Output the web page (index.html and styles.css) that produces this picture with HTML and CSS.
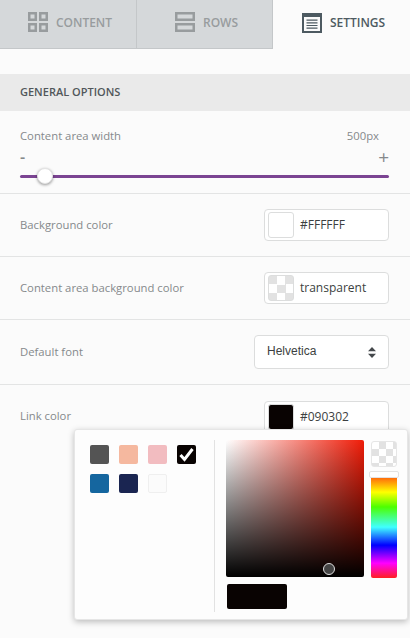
FILE: index.html
```html
<!DOCTYPE html>
<html lang="en">
<head>
    <meta charset="UTF-8">
    <meta name="viewport" content="width=device-width, initial-scale=1.0">
    <title>Settings</title>
    <link rel="stylesheet" href="styles.css">
</head>
<body>
    <div class="tabs">
        <div class="tab">
            <svg class="tab-icon" viewBox="0 0 20 20">
                <path fill-rule="evenodd" d="M0 0h9v9H0zM2.500 2.500v4h4v-4zM11 0h9v9h-9zM13.500 2.500v4h4v-4zM0 11h9v9H0zM2.500 13.500v4h4v-4zM11 11h9v9h-9zM13.500 13.500v4h4v-4z"/>
            </svg>
            <span>CONTENT</span>
        </div>
        <div class="tab">
            <svg class="tab-icon" viewBox="0 0 20 20">
                <path fill-rule="evenodd" d="M0 0h20v9H0zM2.500 2.500v4h15v-4zM0 11h20v9H0zM2.500 13.500v4h15v-4z"/>
            </svg>
            <span>ROWS</span>
        </div>
        <div class="tab active">
            <svg class="tab-icon" viewBox="0 0 20 20">
                <path fill-rule="evenodd" d="M0 0h20v20H0zM2 4v14h16V4z"/>
                <path d="M4.500 6.500h11v1.200h-11zM4.500 9.200h11v1.200h-11zM4.500 11.900h11v1.200h-11zM4.500 14.600h11v1.200h-11z"/>
            </svg>
            <span>SETTINGS</span>
        </div>
    </div>

    <div class="section-title">GENERAL OPTIONS</div>

    <div class="row slider-row">
        <div class="slider-head">
            <span>Content area width</span>
            <span class="slider-value">500px</span>
        </div>
        <div class="slider-signs">
            <span class="minus">-</span>
            <span class="plus">+</span>
        </div>
        <div class="slider-track">
            <div class="slider-knob"></div>
        </div>
    </div>

    <div class="row">
        <span class="row-label">Background color</span>
        <div class="color-input">
            <div class="swatch"></div>
            <span>#FFFFFF</span>
        </div>
    </div>

    <div class="row">
        <span class="row-label">Content area background color</span>
        <div class="color-input">
            <div class="swatch swatch-clear"></div>
            <span>transparent</span>
        </div>
    </div>

    <div class="row font-row">
        <span class="row-label">Default font</span>
        <div class="select">
            <span>Helvetica</span>
            <svg class="select-arrows" viewBox="0 0 8 11">
                <path d="M4 0l4 4.300H0zM4 11L0 6.700h8z"/>
            </svg>
        </div>
    </div>

    <div class="row link-row">
        <span class="row-label">Link color</span>
        <div class="color-input">
            <div class="swatch black"></div>
            <span>#090302</span>
        </div>
    </div>

    <div class="picker">
        <div class="presets">
            <div class="preset gray"></div>
            <div class="preset peach"></div>
            <div class="preset pink"></div>
            <div class="preset black">
                <svg viewBox="0 0 19 19">
                    <path d="M3.500 10l4 4.500 8-10.500" fill="none" stroke="#fff" stroke-width="3"/>
                </svg>
            </div>
            <div class="preset blue"></div>
            <div class="preset navy"></div>
            <div class="preset white"></div>
        </div>
        <div class="picker-main">
            <div class="picker-top">
                <div class="saturation">
                    <div class="saturation-dot"></div>
                </div>
                <div class="picker-side">
                    <div class="alpha"></div>
                    <div class="hue">
                        <div class="hue-handle"></div>
                    </div>
                </div>
            </div>
            <div class="result"></div>
        </div>
    </div>
</body>
</html>
```

FILE: styles.css
```css
body {
    margin: 0;
    height: 638px;
    overflow: hidden;
    position: relative;
    background: #fbfbfb;
    font-family: "Open Sans", "Noto Sans", sans-serif;
    font-size: 11.3px;
    color: #85898b;
}

.tabs {
    display: flex;
    height: 49px;
    margin-bottom: 25px;
}

.tab {
    flex: 1;
    display: flex;
    align-items: center;
    justify-content: center;
    gap: 8px;
    padding: 0 0 4px 4px;
    box-sizing: border-box;
    background: #d5d8da;
    border-right: 1px solid #c4c7c9;
    border-bottom: 1px solid #c4c7c9;
    color: #989c9e;
    font-size: 12px;
    font-weight: 600;
}

.tab:first-child {
    flex: 0 0 137px;
}

.tab:nth-child(2) {
    flex: 0 0 136px;
}

.tab.active {
    background: #fbfbfb;
    border: none;
    color: #4d5a61;
}

.tab-icon {
    width: 20px;
    height: 20px;
    fill: #989c9e;
}

.active .tab-icon {
    fill: #4d5a61;
}

.section-title {
    height: 37px;
    line-height: 36px;
    padding-left: 20px;
    background: #eaeaea;
    color: #51575a;
    font-size: 11px;
    font-weight: 600;
}

.row {
    display: flex;
    align-items: center;
    justify-content: space-between;
    height: 63px;
    box-sizing: border-box;
    padding: 0 21px 0 20px;
    border-bottom: 1px solid #e3e4e4;
}

.row-label {
    margin-bottom: 2px;
}

.slider-row {
    display: block;
    height: 83px;
    padding-top: 17px;
}

.slider-head {
    display: flex;
    justify-content: space-between;
    line-height: 16px;
    padding-right: 10px;
}

.slider-signs {
    display: flex;
    justify-content: space-between;
    height: 16px;
    line-height: 16px;
    margin-top: 5px;
}

.minus {
    font-size: 16px;
    font-weight: 600;
}

.plus {
    font-size: 19px;
}

.slider-track {
    position: relative;
    height: 3px;
    margin-top: 10px;
    background: #7b4492;
    border-radius: 2px;
}

.slider-knob {
    position: absolute;
    left: 17px;
    top: -7px;
    width: 16px;
    height: 16px;
    box-sizing: border-box;
    background: #fff;
    border: 1px solid #e4e4e4;
    border-radius: 50%;
    box-shadow: 0 1px 3px rgba(0, 0, 0, 0.4);
}

.color-input {
    display: flex;
    align-items: center;
    gap: 6px;
    width: 125px;
    height: 32px;
    box-sizing: border-box;
    padding-left: 3px;
    background: #fff;
    border: 1px solid #dcdddd;
    border-radius: 4px;
    color: #3c3f41;
    font-size: 12px;
}

.color-input span {
    margin-bottom: 1px;
}

.swatch {
    width: 26px;
    height: 26px;
    box-sizing: border-box;
    background: #fff;
    border: 1px solid #dcdddd;
    border-radius: 3px;
}

.swatch.black {
    background: #090302;
}

.swatch-clear {
    background-image: conic-gradient(#e2e2e2 25%, #fff 0 50%, #e2e2e2 0 75%, #fff 0);
    background-size: 17px 17px;
    background-position: 8px 0;
}

.font-row {
    height: 65px;
}

.select {
    display: flex;
    align-items: center;
    justify-content: space-between;
    width: 135px;
    height: 34px;
    box-sizing: border-box;
    padding: 0 12px 2px 12px;
    background: #fff;
    border: 1px solid #dcdddd;
    border-radius: 4px;
    color: #3c3f41;
    font-family: "Liberation Sans", Arial, sans-serif;
    font-size: 12px;
}

.select-arrows {
    width: 8px;
    height: 11px;
    margin-top: 3px;
    fill: #44484b;
}

.link-row {
    border-bottom: none;
}

.picker {
    position: absolute;
    left: 74px;
    top: 429px;
    width: 334px;
    height: 191px;
    display: flex;
    box-sizing: border-box;
    padding: 10px 11px 0 0;
    background: #fdfdfd;
    border: 1px solid #e6e6e6;
    border-radius: 3px;
    box-shadow: 0 2px 6px rgba(0, 0, 0, 0.25);
}

.presets {
    flex: 0 0 140px;
    height: 172px;
    box-sizing: border-box;
    display: grid;
    grid-template-columns: repeat(4, 19px);
    grid-auto-rows: 19px;
    gap: 10px;
    align-content: start;
    padding: 5px 0 0 15px;
    border-right: 1px solid #e2e2e2;
}

.preset {
    border-radius: 2px;
}

.preset svg {
    display: block;
}

.gray { background: #545454; }
.peach { background: #f5b89f; }
.pink { background: #f2bcc0; }
.black { background: #090302; }
.blue { background: #15669f; }
.navy { background: #1a2551; }
.white { background: #fbfbfb; border: 1px solid #efefef; }

.picker-main {
    padding-left: 11px;
}

.picker-top {
    display: flex;
    gap: 7px;
}

.saturation {
    position: relative;
    width: 138px;
    height: 137px;
    background: linear-gradient(to top, #000, transparent), linear-gradient(to right, #fff, #f01c08);
    border-radius: 2px;
}

.saturation-dot {
    position: absolute;
    left: 97px;
    top: 123px;
    width: 12px;
    height: 12px;
    box-sizing: border-box;
    background: #444;
    border: 1px solid #ddd;
    border-radius: 50%;
}

.picker-side {
    width: 26px;
    margin-top: 1px;
}

.alpha {
    height: 26px;
    margin-bottom: 5px;
    box-sizing: border-box;
    background-color: #fff;
    background-image: conic-gradient(#e2e2e2 25%, #fff 0 50%, #e2e2e2 0 75%, #fff 0);
    background-size: 14px 14px;
    border: 1px solid #e6e6e6;
    border-radius: 3px;
}

.hue {
    position: relative;
    height: 106px;
    background: linear-gradient(to bottom, #ff3010 0%, #ffff00 19%, #4cff00 33%, #40ffff 52%, #0000ff 69%, #ff00ff 86%, #ff2020 100%);
    border-radius: 2px;
}

.hue-handle {
    position: absolute;
    left: -2px;
    top: -1px;
    width: 30px;
    height: 7px;
    box-sizing: border-box;
    background: #fff;
    border: 1px solid #e2e2e2;
    border-radius: 2px;
}

.result {
    width: 60px;
    height: 25px;
    margin: 6px 0 0 1px;
    background: #090302;
    border-radius: 2px;
}
```
